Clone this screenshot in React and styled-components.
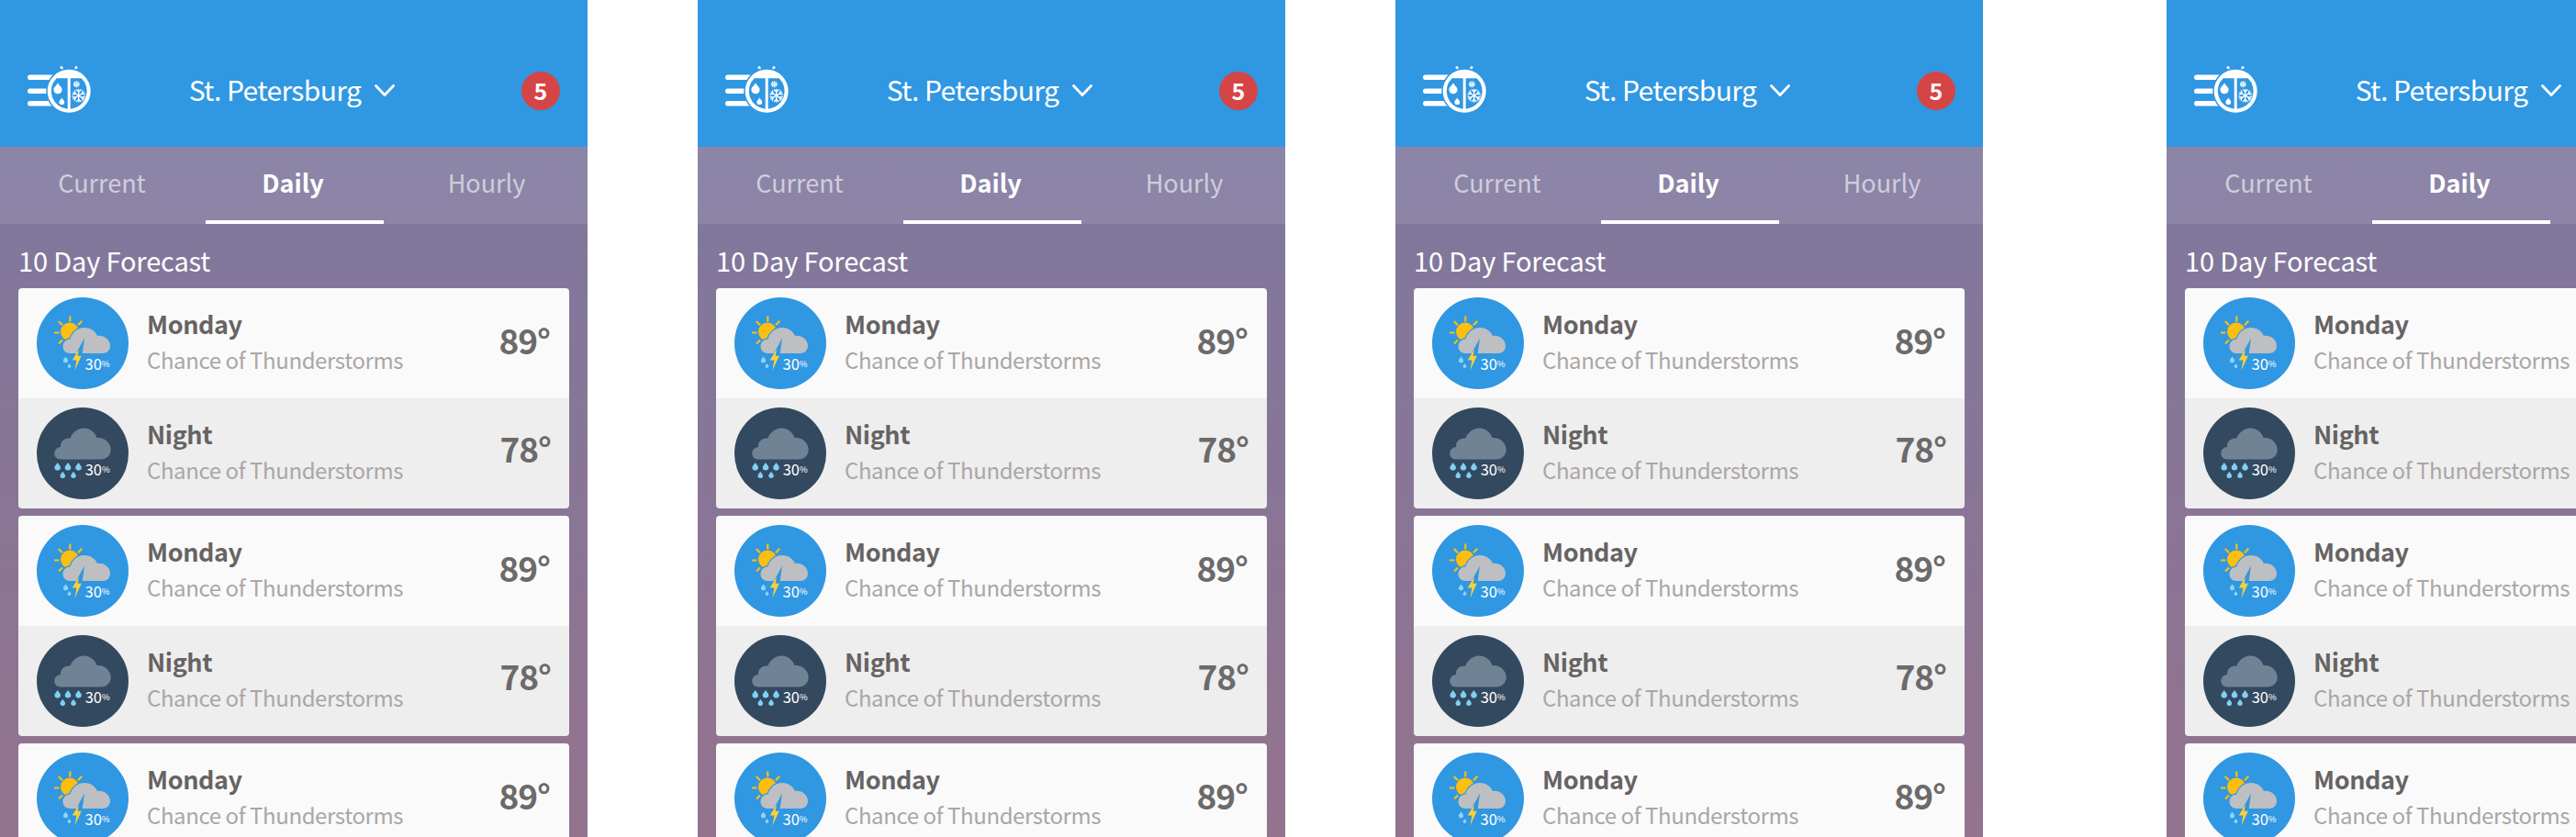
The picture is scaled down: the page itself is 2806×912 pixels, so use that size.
import React from 'react';
import styled, { createGlobalStyle } from 'styled-components';

const Global = createGlobalStyle`
  html, body { margin: 0; padding: 0; background: #fff; overflow: hidden; }
  body { font-family: "Noto Sans CJK SC", "Noto Sans", sans-serif; }
`;
const Page = styled.div`
  display: flex; width: 2806px; height: 912px; overflow: hidden; background: #fff;
`;
const Phone = styled.section`
  flex: none; width: 640px; height: 912px; overflow: hidden;
  margin-right: ${p => p.$gap}px; display: flex; flex-direction: column;
  background: linear-gradient(180deg, #7e789e 160px, #94738e 912px);
`;
const Header = styled.header`
  flex: none; height: 160px; box-sizing: border-box; padding: 36px 30px 0;
  background: #3097e2; display: grid; grid-template-columns: 1fr auto 1fr; align-items: center;
`;
const Logo = styled.svg` width: 72px; height: 54px; display: block; `;
const City = styled.button`
  all: unset; display: flex; align-items: center; gap: 15px; color: #fff;
  font-size: 30px; line-height: 40px; letter-spacing: -.6px; margin: -2px 4px 0 0;
`;
const Badge = styled.span`
  justify-self: end; width: 42px; height: 42px; margin-top: 2px; border-radius: 50%;
  background: #d64545; color: #fff; padding-bottom: 2px; box-sizing: border-box;
  display: flex; align-items: center; justify-content: center; font-size: 25px; font-weight: 700;
`;
const Tabs = styled.nav`
  flex: none; height: 84px; box-sizing: border-box; padding: 0 13px 0 15px; display: grid;
  grid-template-columns: repeat(3, 1fr); column-gap: 15px; background: rgba(255,255,255,.1);
`;
const Tab = styled.a`
  display: flex; align-items: center; justify-content: center; box-sizing: border-box;
  font-size: 27px; padding: 0 ${p => p.$active ? 4 : p.$first ? 2 : 0}px 4px 0;
  color: ${p => p.$active ? '#fff' : 'rgba(255,255,255,.6)'};
  font-weight: ${p => p.$active ? 700 : 400};
  border-bottom: 4px solid ${p => p.$active ? '#fff' : 'transparent'};
`;
const Title = styled.h2`
  margin: 0; flex: none; height: 70px; box-sizing: border-box; padding: 20px 20px 0;
  color: #fff; font-size: 29px; line-height: 38px; font-weight: 400; letter-spacing: -.15px;
`;
const Cards = styled.div` display: flex; flex-direction: column; gap: 8px; padding: 0 20px; `;
const Card = styled.article` border-radius: 4px; overflow: hidden; flex: none; `;
const Row = styled.div`
  height: 120px; box-sizing: border-box; padding: 10px 20px; display: flex; align-items: center; gap: 20px;
  background: ${p => p.$night ? '#eeeeee' : '#fafafa'};
`;
const Icon = styled.svg` flex: none; width: 100px; height: 100px; display: block; `;
const Info = styled.div` flex: 1; min-width: 0; display: flex; flex-direction: column; gap: 5px; margin-top: -4px; `;
const Day = styled.div` color: #676363; font-size: 27px; line-height: 34px; font-weight: 700; letter-spacing: -.4px; `;
const Desc = styled.div` color: #aaa6a6; font-size: 24px; line-height: 34px; letter-spacing: -.4px; `;
const Temp = styled.div`
  color: #6c6a6a; font-size: 37px; line-height: 44px; font-weight: 700; letter-spacing: -1px;
  margin-right: ${p => p.$night ? 0 : 1}px; margin-top: ${p => p.$night ? -12 : -8}px;
`;

const flake = (cx, cy, r, w) => [0, 60, 120].map(a => (
  <g key={a} transform={`rotate(${a} ${cx} ${cy})`} stroke="#fff" strokeWidth={w} fill="none" strokeLinecap="round">
    <path d={`M${cx} ${cy - r}V${cy + r}`} />
    <path d={`M${cx - r * .35} ${cy - r * .95}L${cx} ${cy - r * .6}L${cx + r * .35} ${cy - r * .95}M${cx - r * .35} ${cy + r * .95}L${cx} ${cy + r * .6}L${cx + r * .35} ${cy + r * .95}`} />
  </g>
));
const drop = (x, y, s, fill) => (
  <path d={`M${x} ${y - 1.35 * s}C${x + .4 * s} ${y - .6 * s} ${x + s} ${y - .3 * s} ${x + s} ${y + .25 * s}A${s} ${s} 0 0 1 ${x - s} ${y + .25 * s}C${x - s} ${y - .3 * s} ${x - .4 * s} ${y - .6 * s} ${x} ${y - 1.35 * s}Z`} fill={fill} />
);

const BrandLogo = () => (
  <Logo viewBox="0 0 72 54" aria-hidden="true">
    <g fill="#fff">
      <rect x="0" y="10.5" width="30" height="5.6" rx="2.8" />
      <rect x="0" y="25.4" width="30" height="5.6" rx="2.8" />
      <rect x="0" y="39" width="30" height="5.6" rx="2.8" />
      <circle cx="37" cy="2.6" r="1.5" /><circle cx="53" cy="2.6" r="1.5" />
    </g>
    <path d="M37.5 3L39.5 7M52.5 3L50.5 7" stroke="#fff" strokeWidth="1.2" />
    <circle cx="45.2" cy="28.3" r="25" fill="#3097e2" />
    <circle cx="45.2" cy="28.3" r="23.5" fill="#fff" />
    <path d="M43.7 14.2H31.7A19.5 19.5 0 0 0 43.7 47.7Z" fill="#3097e2" />
    <path d="M46.7 14.2H58.7A19.5 19.5 0 0 1 46.7 47.7Z" fill="#3097e2" />
    {drop(33, 25.5, 4.6, '#fff')}
    {drop(37.3, 39.5, 2.9, '#fff')}
    {flake(53.3, 20.8, 3, .9)}
    {flake(55.7, 33.2, 6.8, 1.3)}
  </Logo>
);
const Chevron = () => (
  <svg width="22" height="14" viewBox="0 0 22 14" aria-hidden="true" style={{ display: 'block', marginTop: 4 }}>
    <path d="M1.5 1.5L11 11.5L20.5 1.5" fill="none" stroke="#fff" strokeWidth="2.8" strokeLinecap="round" strokeLinejoin="round" />
  </svg>
);
const DayIcon = () => (
  <Icon viewBox="0 0 100 100" aria-hidden="true">
    <circle cx="50" cy="50" r="50" fill="#3097e2" />
    <circle cx="36" cy="37.5" r="10" fill="#fdbe10" />
    <path d="M36.3 20.5V26.5M19 38.5H24.5M23.7 26L28 30.2M49.3 25.8L45 30.2M24 50.5L28 46.5" stroke="#fdbe10" strokeWidth="2.2" fill="none" />
    <path d="M36 61C31 61 28.5 57 28.5 53.5C28.5 48.5 32.5 45.5 36.5 45.5C38 39 44 33 52 33C59 33 64 37 66 42C73 41 80 46 80 53C80 58 76 61 72 61Z" fill="#bdbfc2" stroke="#3097e2" strokeWidth="2.4" paintOrder="stroke" />
    <path d="M52 44.5L43.5 60L49.5 62.5Z" fill="#3097e2" />
    <path d="M46 56.5L38.7 68.5L43.4 68.5L41.4 79.8L48.8 63.8L44.6 63.8Z" fill="#f7d038" />
    {drop(31.5, 68, 2.6, '#8fd3f7')}
    {drop(35.5, 74.5, 1.9, '#8fd3f7')}
    <text x="52.5" y="78.6" fill="#fff" fontSize="16.5" fontFamily="Noto Sans CJK SC, sans-serif">30<tspan fontSize="9.5" dy="-3">%</tspan></text>
  </Icon>
);
const NightIcon = () => (
  <Icon viewBox="0 0 100 100" aria-hidden="true">
    <circle cx="50" cy="50" r="50" fill="#33495f" />
    <path d="M26 56.5C21.5 56.5 19.3 53 19.3 50.5C19.3 46 22 43.5 26 43C25.5 37 30 33 36.5 33.5C38.5 27.5 44.5 22.5 51 22.5C58 22.5 63.5 27 65.5 33C73.5 32 80.7 38.5 80.7 46C80.7 52 76 56.5 70 56.5Z" fill="#6f8395" />
    {drop(22.7, 64.5, 3.3, '#7fd0f5')}{drop(34, 64.5, 3.3, '#7fd0f5')}{drop(45.5, 64.5, 3.3, '#7fd0f5')}
    {drop(28.3, 73.5, 2.8, '#7fd0f5')}{drop(40, 73.5, 2.8, '#7fd0f5')}
    <text x="52.7" y="74" fill="#fff" fontSize="16.5" fontFamily="Noto Sans CJK SC, sans-serif">30<tspan fontSize="9.5" dy="-3">%</tspan></text>
  </Icon>
);

const ForecastRow = ({ night, name, temp }) => (
  <Row $night={night}>
    {night ? <NightIcon /> : <DayIcon />}
    <Info>
      <Day>{name}</Day>
      <Desc>Chance of Thunderstorms</Desc>
    </Info>
    <Temp $night={night}>{temp}</Temp>
  </Row>
);

const Screen = ({ gap }) => (
  <Phone $gap={gap}>
    <Header>
      <BrandLogo />
      <City>St. Petersburg <Chevron /></City>
      <Badge>5</Badge>
    </Header>
    <Tabs>
      <Tab $first>Current</Tab>
      <Tab $active>Daily</Tab>
      <Tab>Hourly</Tab>
    </Tabs>
    <Title>10 Day Forecast</Title>
    <Cards>
      {[0, 1, 2].map(i => (
        <Card key={i}>
          <ForecastRow name="Monday" temp="89°" />
          <ForecastRow night name="Night" temp="78°" />
        </Card>
      ))}
    </Cards>
  </Phone>
);

export default function App() {
  return (
    <Page>
      <Global />
      <Screen gap={120} />
      <Screen gap={120} />
      <Screen gap={200} />
      <Screen gap={0} />
    </Page>
  );
}
